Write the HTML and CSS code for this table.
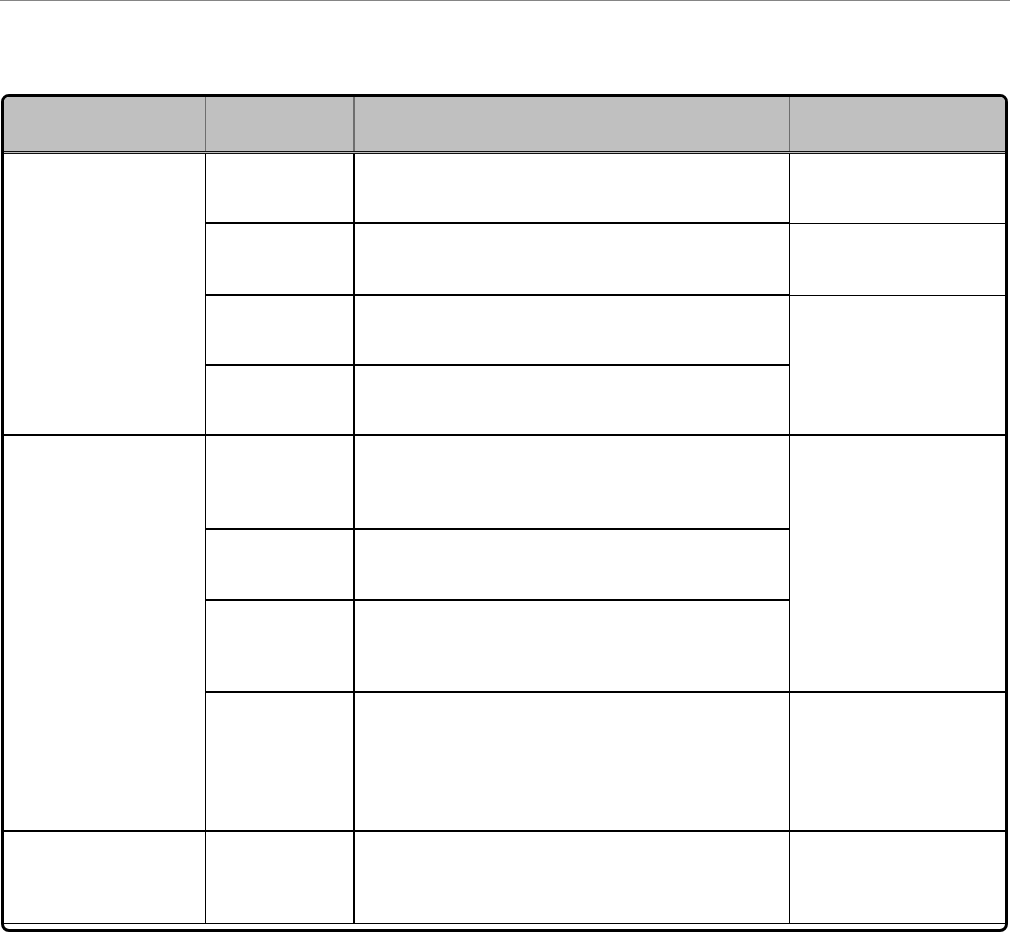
FILE: index.html
```html
<!DOCTYPE html>
<html lang="en">
<head>
<meta charset="utf-8">
<title>Table</title>
<link rel="stylesheet" href="styles.css">
</head>
<body>
<div class="rule"></div>
<div class="frame">
  <div class="head">
    <div class="hc c1"></div>
    <div class="hc c2"></div>
    <div class="hc c3"></div>
    <div class="hc c4"></div>
  </div>
  <div class="grid">
    <div class="cell k1 g1"></div>
    <div class="cell k2 r1 thick"></div>
    <div class="cell k3 r1 thick"></div>
    <div class="cell k4 r1 thin"></div>

    <div class="cell k2 r2 thick"></div>
    <div class="cell k3 r2 thick"></div>
    <div class="cell k4 r2 thin"></div>

    <div class="cell k2 r3 thick"></div>
    <div class="cell k3 r3 thick"></div>
    <div class="cell k4 r34 thick"></div>

    <div class="cell k2 r4 thick"></div>
    <div class="cell k3 r4 thick"></div>

    <div class="cell k1 g2"></div>
    <div class="cell k2 r5 thick"></div>
    <div class="cell k3 r5 thick"></div>
    <div class="cell k4 r57 thick"></div>

    <div class="cell k2 r6 thick"></div>
    <div class="cell k3 r6 thick"></div>

    <div class="cell k2 r7 thick"></div>
    <div class="cell k3 r7 thick"></div>

    <div class="cell k2 r8 thick"></div>
    <div class="cell k3 r8 thick"></div>
    <div class="cell k4 r8 thick"></div>

    <div class="cell k1 g3 last"></div>
    <div class="cell k2 r9 last"></div>
    <div class="cell k3 r9 last"></div>
    <div class="cell k4 r9 last"></div>
  </div>
</div>
</body>
</html>
```
FILE: styles.css
```css
html, body {
  margin: 0;
  padding: 0;
  background: #ffffff;
  font-family: "Liberation Sans", Arial, sans-serif;
}

.rule {
  height: 1px;
  background: #858585;
}

.frame {
  box-sizing: border-box;
  margin: 93px 0 0 1px;
  width: 1007px;
  height: 838px;
  border: 3px solid #000;
  border-radius: 8px;
  overflow: hidden;
  background: #fff;
  padding-bottom: 6px;
}

.head {
  display: grid;
  grid-template-columns: 202px 149px 435px 215px;
  height: 57px;
  box-sizing: border-box;
  background: #c0c0c0;
  border-bottom: 3px double #111;
}

.hc {
  box-sizing: border-box;
}

.hc.c1 { border-right: 1px solid #6e6e6e; }
.hc.c2 { border-right: 2px solid #6e6e6e; }
.hc.c3 { border-right: 1px solid #6e6e6e; }

.grid {
  display: grid;
  grid-template-columns: 202px 149px 435px 215px;
  grid-template-rows: 70px 72px 70px 70px 94px 71px 92px 139px 92px;
}

.cell {
  box-sizing: border-box;
}

.k1 { grid-column: 1; border-right: 1px solid #000; border-bottom: 2px solid #000; }
.k2 { grid-column: 2; border-right: 2px solid #000; }
.k3 { grid-column: 3; border-right: 1px solid #000; }
.k4 { grid-column: 4; }

.thick { border-bottom: 2px solid #000; }
.thin { border-bottom: 1px solid #000; }
.last { border-bottom: 1px solid #000; }

.g1 { grid-row: 1 / 5; }
.g2 { grid-row: 5 / 9; }
.g3 { grid-row: 9; }

.r1 { grid-row: 1; }
.r2 { grid-row: 2; }
.r3 { grid-row: 3; }
.r4 { grid-row: 4; }
.r34 { grid-row: 3 / 5; }
.r5 { grid-row: 5; }
.r6 { grid-row: 6; }
.r7 { grid-row: 7; }
.r57 { grid-row: 5 / 8; }
.r8 { grid-row: 8; }
.r9 { grid-row: 9; }
```
